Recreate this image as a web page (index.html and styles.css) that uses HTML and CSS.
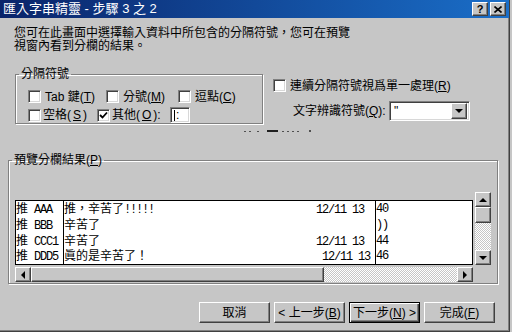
FILE: index.html
```html
<!DOCTYPE html>
<html lang="zh-Hant">
<head>
  <meta charset="UTF-8" />
  <title>匯入字串精靈 - 步驟 3 之 2</title>
  <link rel="stylesheet" href="styles.css">
</head>
<body>

<div class="window">
  <div class="titlebar">
    <span class="title">匯入字串精靈 - 步驟 3 之 2</span>
    <div class="caption-btns">
      <span class="cap-btn raised">?</span>
      <span class="cap-btn raised">
        <svg width="8" height="7" viewBox="0 0 8 7"><path d="M0.5 0.5 L7.5 6.5 M7.5 0.5 L0.5 6.5" stroke="#000" stroke-width="1.6"/></svg>
      </span>
    </div>
  </div>

  <p class="intro">您可在此畫面中選擇輸入資料中所包含的分隔符號，您可在預覽<br>視窗內看到分欄的結果。</p>

  <div class="options">
    <fieldset class="group delims">
      <legend>分隔符號</legend>
      <div class="opt-row row-a">
        <label class="opt"><span class="check sunken"></span><span class="gap4">Tab 鍵(<u>T</u>)</span></label>
        <label class="opt"><span class="check sunken"></span><span class="gap4">分號(<u>M</u>)</span></label>
        <label class="opt"><span class="check sunken"></span><span class="gap4">逗點(<u>C</u>)</span></label>
      </div>
      <div class="opt-row row-b">
        <label class="opt"><span class="check sunken"></span>空格(<u>S</u>)</label>
        <label class="opt"><span class="check sunken">
          <svg width="9" height="9" viewBox="0 0 9 9"><path d="M1 4 L3.5 6.5 L8 1.5" fill="none" stroke="#000" stroke-width="1.8"/></svg>
        </span>其他(<u>O</u>):</label>
        <span class="text-box sunken"><i class="caret"></i>:</span>
      </div>
    </fieldset>

    <div class="side">
      <label class="opt"><span class="check sunken"></span><span class="gap4">連續分隔符號視爲單一處理(<u>R</u>)</span></label>
      <div class="qualifier">
        <span class="qual-label">文字辨識符號(<u>Q</u>):</span>
        <div class="combo sunken">
          <span class="combo-val">"</span>
          <span class="combo-btn raised"><i class="arrow down"></i></span>
        </div>
      </div>
    </div>
  </div>

  <svg class="ruler" width="70" height="4" viewBox="0 0 70 4">
    <rect x="0" y="2" width="2" height="1" fill="#505050"/>
    <rect x="5" y="2" width="2" height="1" fill="#505050"/>
    <rect x="13" y="2" width="2" height="1" fill="#505050"/>
    <rect x="23" y="1" width="11" height="2" fill="#202020"/>
    <rect x="38" y="2" width="2" height="1" fill="#505050"/>
    <rect x="43" y="2" width="2" height="1" fill="#505050"/>
    <rect x="48" y="2" width="2" height="1" fill="#505050"/>
    <rect x="53" y="2" width="2" height="1" fill="#505050"/>
    <rect x="65" y="1" width="2" height="2" fill="#505050"/>
  </svg>

  <fieldset class="group preview">
    <legend>預覽分欄結果(<u>P</u>)</legend>
    <div class="preview-body">
      <div class="grid-wrap">
        <div class="grid">
          <div class="col c1">
            <div class="cell">推<span class="lat"> AAA</span></div>
            <div class="cell">推<span class="lat"> BBB</span></div>
            <div class="cell">推<span class="lat"> CCC1</span></div>
            <div class="cell">推<span class="lat"> DDD5</span></div>
          </div>
          <div class="col c2">
            <div class="cell">推，辛苦了<span class="lat">!!!!!</span><span class="lat date">12/11 13</span></div>
            <div class="cell">辛苦了</div>
            <div class="cell">辛苦了<span class="lat date">12/11 13</span></div>
            <div class="cell">眞的是辛苦了！<span class="lat date near">12/11 13</span></div>
          </div>
          <div class="col c3">
            <div class="cell"><span class="lat">40</span></div>
            <div class="cell"><span class="lat">))</span></div>
            <div class="cell"><span class="lat">44</span></div>
            <div class="cell"><span class="lat">46</span></div>
          </div>
        </div>
        <div class="hscroll">
          <span class="sb-btn raised"><i class="arrow left"></i></span>
          <span class="h-thumb raised"></span>
          <span class="track"></span>
          <span class="sb-btn raised"><i class="arrow right"></i></span>
        </div>
      </div>
      <div class="vscroll">
        <span class="sb-btn raised"><i class="arrow up"></i></span>
        <span class="v-thumb raised"></span>
        <span class="track"></span>
        <span class="sb-btn raised"><i class="arrow down"></i></span>
      </div>
    </div>
  </fieldset>

  <div class="buttons">
    <button class="btn raised">取消</button>
    <button class="btn raised">&lt; 上一步(<u>B</u>)</button>
    <button class="btn default">下一步(<u>N</u>) &gt;</button>
    <button class="btn raised">完成(<u>F</u>)</button>
  </div>
</div>

</body>
</html>
```

FILE: styles.css
```css
* {
  box-sizing: border-box;
}
body {
  margin: 0;
  background: #c6c6c6;
  color: #000;
  font: 12px/12px "Liberation Sans", "Noto Sans CJK TC", sans-serif;
}
.window {
  width: 510px;
  height: 332px;
  background: #c6c6c6;
  border-right: 1px solid #404040;
  border-bottom: 1px solid #404040;
  box-shadow: inset -1px -1px 0 #808080;
}

/* classic 3d edges */
.raised {
  border: 1px solid;
  border-color: #fff #404040 #404040 #fff;
  box-shadow: inset -1px -1px 0 #808080;
  background: #c6c6c6;
}
.sunken {
  border: 1px solid;
  border-color: #808080 #fff #fff #808080;
  box-shadow: inset 1px 1px 0 #404040, inset -1px -1px 0 #d8d8d8;
  background: #fff;
}

.titlebar {
  height: 18px;
  display: flex;
  align-items: center;
  justify-content: space-between;
  padding: 0 3px;
  background: linear-gradient(90deg, #0a246a, #1a6ec8);
  color: #fff;
}
.title {
  font-size: 13px;
  line-height: 18px;
}
.caption-btns {
  display: flex;
  gap: 2px;
}
.cap-btn {
  width: 16px;
  height: 14px;
  display: flex;
  align-items: center;
  justify-content: center;
  color: #000;
  font: bold 11px/12px "Liberation Sans", sans-serif;
}

.intro {
  margin: 9px 0 0 14px;
  line-height: 13px;
}

.options {
  display: flex;
  align-items: flex-start;
  margin-top: 15px;
}
.group {
  margin: 0;
  min-width: 0;
  border: 1px solid #808080;
  box-shadow: inset 1px 1px 0 #fff, 1px 1px 0 #fff;
}
.group legend {
  padding: 0 2px;
  line-height: 12px;
}
.delims {
  margin-left: 15px;
  width: 248px;
  padding: 8px 0 0 3px;
}
.opt-row {
  display: grid;
  align-items: center;
  padding-left: 9px;
}
.row-a {
  height: 17px;
  grid-template-columns: 78px 72px auto;
}
.row-b {
  height: 16px;
  margin-top: 2px;
  grid-template-columns: 69px 73px auto;
}
.opt {
  display: flex;
  align-items: center;
  gap: 2px;
  white-space: nowrap;
}
.gap4 {
  margin-left: 2px;
}
.check {
  width: 13px;
  height: 13px;
  display: flex;
  align-items: center;
  justify-content: center;
  flex: none;
}
.text-box {
  width: 20px;
  height: 16px;
  display: flex;
  align-items: center;
  padding-left: 3px;
  line-height: 12px;
}
.caret {
  width: 1px;
  height: 11px;
  background: #000;
  margin-right: 1px;
}

.side {
  margin-left: 10px;
  padding-top: 11px;
}
.side .opt {
  height: 13px;
}
.qualifier {
  display: flex;
  align-items: center;
  margin-top: 9px;
  padding-left: 20px;
}
.qual-label {
  width: 96px;
  white-space: nowrap;
}
.combo {
  width: 81px;
  height: 20px;
  display: flex;
  align-items: center;
  justify-content: space-between;
  padding: 2px;
}
.combo-val {
  padding-left: 2px;
  line-height: 12px;
}
.combo-btn {
  width: 16px;
  height: 16px;
  display: flex;
  align-items: center;
  justify-content: center;
}

.arrow {
  width: 0;
  height: 0;
  border: 0 solid transparent;
}
.arrow.down {
  border-width: 4px 4px 0;
  border-top-color: #000;
}
.arrow.up {
  border-width: 0 4px 4px;
  border-bottom-color: #000;
}
.arrow.left {
  border-width: 4px 4px 4px 0;
  border-right-color: #000;
}
.arrow.right {
  border-width: 4px 0 4px 4px;
  border-left-color: #000;
}

.ruler {
  display: block;
  margin: 5px 0 0 244px;
}

.preview {
  margin: 21px 0 0 8px;
  width: 490px;
  padding: 0 6px 1px 6px;
}
.preview legend {
  margin-left: -3px;
}
.preview-body {
  display: flex;
  gap: 2px;
}
.grid-wrap {
  width: 458px;
  padding-top: 34px;
}
.grid {
  height: 65px;
  display: flex;
  background: #fff;
  border: 1px solid #000;
}
.col {
  display: flex;
  flex-direction: column;
}
.c1 {
  width: 48px;
  border-right: 1px solid #000;
}
.c2 {
  width: 312px;
  border-right: 1px solid #000;
}
.c3 {
  flex: 1;
}
.cell {
  height: 16px;
  line-height: 16px;
  display: flex;
  align-items: baseline;
  white-space: pre;
  overflow: hidden;
}
.lat {
  font-family: "Liberation Mono", monospace;
  font-size: 12px;
  letter-spacing: -1.2px;
  color: #000;
}
.date {
  margin-left: auto;
  padding-right: 11px;
}
.date.near {
  padding-right: 5px;
}

.track {
  flex: 1;
  background: repeating-conic-gradient(#fff 0 25%, #c6c6c6 0 50%) 0 0 / 2px 2px;
}
.sb-btn {
  display: flex;
  align-items: center;
  justify-content: center;
  flex: none;
}
.hscroll {
  display: flex;
  height: 15px;
  margin-top: 2px;
}
.hscroll .sb-btn {
  width: 16px;
}
.h-thumb {
  width: 293px;
}
.vscroll {
  width: 16px;
  height: 73px;
  margin-top: 26px;
  display: flex;
  flex-direction: column;
}
.vscroll .sb-btn {
  height: 15px;
}
.v-thumb {
  height: 16px;
}

.buttons {
  display: flex;
  justify-content: flex-end;
  gap: 4px;
  margin-top: 18px;
  padding-right: 14px;
}
.btn {
  width: 71px;
  height: 21px;
  padding: 0;
  font: 12px/12px "Liberation Sans", "Noto Sans CJK TC", sans-serif;
  color: #000;
}
.btn.default {
  background: #c6c6c6;
  border: 1px solid #000;
  box-shadow: inset 1px 1px 0 #fff, inset -1px -1px 0 #404040, inset -2px -2px 0 #808080;
}
```
